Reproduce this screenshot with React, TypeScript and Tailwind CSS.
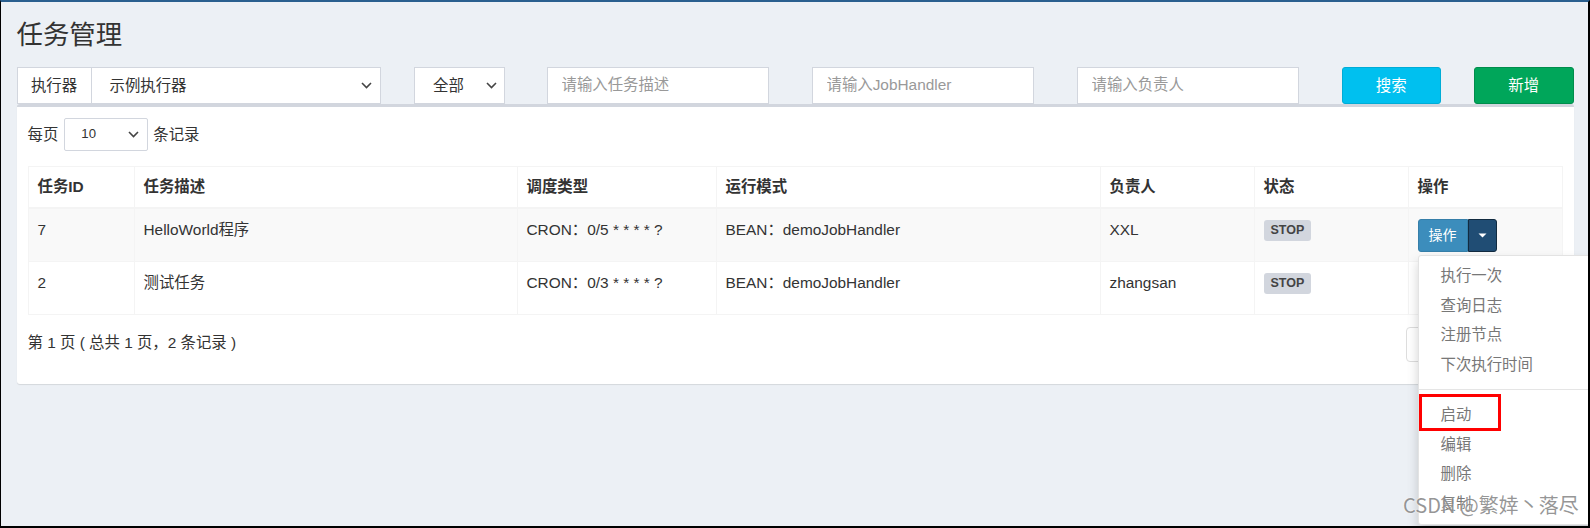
import React from "react";

function Chevron() {
  return (
    <svg width="11" height="7" viewBox="0 0 11 7" fill="none">
      <path d="M1 1l4.5 4.5L10 1" stroke="#444" strokeWidth="1.6" />
    </svg>
  );
}

function Caret() {
  return (
    <svg width="9" height="5" viewBox="0 0 9 5">
      <path d="M0.5 0.5h8L4.5 4.5z" fill="#fff" />
    </svg>
  );
}

const cols = "grid grid-cols-[106px_383px_199px_384px_154px_154px_155px]";

function BtnGroup({ open }: { open?: boolean }) {
  return (
    <div className="relative inline-flex h-[33px]">
      <div className="flex items-center rounded-l-[3px] border border-[#367fa9] bg-[#3c8dbc] px-[10px] text-[14px] text-white">
        操作
      </div>
      <div className="flex w-[29px] items-center justify-center rounded-r-[3px] border border-[#122b40] bg-[#204d74]">
        <Caret />
      </div>
      {open && (
        <div className="absolute left-0 top-[36px] z-20 w-[182px] rounded-[3px] border border-[#e3e3e3] bg-white py-[5.5px] text-[15.4px] text-[#777] shadow-[0_6px_12px_rgba(0,0,0,0.175)]">
          <div className="h-[29.5px] px-[22px] leading-[29.5px]">执行一次</div>
          <div className="h-[29.5px] px-[22px] leading-[29.5px]">查询日志</div>
          <div className="h-[29.5px] px-[22px] leading-[29.5px]">注册节点</div>
          <div className="h-[29.5px] px-[22px] leading-[29.5px]">下次执行时间</div>
          <div className="my-[10px] h-px bg-[#e5e5e5]" />
          <div className="h-[29.5px] px-[22px] leading-[29.5px]">启动</div>
          <div className="h-[29.5px] px-[22px] leading-[29.5px]">编辑</div>
          <div className="h-[29.5px] px-[22px] leading-[29.5px]">删除</div>
          <div className="h-[29.5px] px-[22px] leading-[29.5px]">复制</div>
          <div className="absolute left-0 top-[138px] h-[37px] w-[82px] border-[3px] border-[#ff0000]" />
        </div>
      )}
    </div>
  );
}

type Row = { id: string; desc: string; cron: string; mode: string; author: string };

const rows: Row[] = [
  { id: "7", desc: "HelloWorld程序", cron: "CRON：0/5 * * * * ?", mode: "BEAN：demoJobHandler", author: "XXL" },
  { id: "2", desc: "测试任务", cron: "CRON：0/3 * * * * ?", mode: "BEAN：demoJobHandler", author: "zhangsan" },
];

export default function App() {
  return (
    <div className="relative h-[528px] w-[1590px] overflow-hidden bg-[#ecf0f5] font-['Liberation_Sans','Noto_Sans_CJK_SC',sans-serif] text-[15.4px] text-[#333]">
      <div className="px-[16.5px] pt-[21px]">
        <h1 className="text-[26.4px] font-normal leading-[29px] text-[#333]">任务管理</h1>
      </div>

      <div className="px-[16.5px] pt-[16.5px]">
        <div className="-mx-[16.5px] grid grid-cols-12">
          <div className="col-span-3 px-[16.5px]">
            <div className="flex h-[37.4px]">
              <div className="flex w-[75px] shrink-0 items-center justify-center border border-[#d2d6de] bg-white">
                执行器
              </div>
              <div className="flex flex-1 items-center justify-between border border-l-0 border-[#d2d6de] bg-white pl-[18px] pr-[8px]">
                <span>示例执行器</span>
                <Chevron />
              </div>
            </div>
          </div>
          <div className="col-span-1 px-[16.5px]">
            <div className="flex h-[37.4px] w-[91px] items-center justify-between border border-[#d2d6de] bg-white pl-[18px] pr-[7px]">
              <span>全部</span>
              <Chevron />
            </div>
          </div>
          <div className="col-span-2 px-[16.5px]">
            <input
              readOnly
              placeholder="请输入任务描述"
              className="h-[37.4px] w-[222px] border border-[#d2d6de] bg-white px-[14px] outline-none placeholder:text-[#999]"
            />
          </div>
          <div className="col-span-2 px-[16.5px]">
            <input
              readOnly
              placeholder="请输入JobHandler"
              className="h-[37.4px] w-[222px] border border-[#d2d6de] bg-white px-[14px] outline-none placeholder:text-[#999]"
            />
          </div>
          <div className="col-span-2 px-[16.5px]">
            <input
              readOnly
              placeholder="请输入负责人"
              className="h-[37.4px] w-[222px] border border-[#d2d6de] bg-white px-[14px] outline-none placeholder:text-[#999]"
            />
          </div>
          <div className="col-span-1 px-[16.5px]">
            <div className="flex h-[37.4px] items-center justify-center rounded-[3px] border border-[#00acd6] bg-[#00c0ef] text-white">
              搜索
            </div>
          </div>
          <div className="col-span-1 px-[16.5px]">
            <div className="flex h-[37.4px] items-center justify-center rounded-[3px] border border-[#008d4c] bg-[#00a65a] text-white">
              新增
            </div>
          </div>
        </div>

        <div className="rounded-[3px] border-t-[3.3px] border-t-[#d2d6de] bg-white px-[11px] pb-[22px] pt-[11px] shadow-[0_1px_1px_rgba(0,0,0,0.1)]">
          <div className="flex h-[33px] items-center">
            <span>每页</span>
            <div className="ml-[6px] flex h-[33px] w-[84px] items-center justify-between rounded-[2px] border border-[#d2d6de] pl-[16px] pr-[8px] text-[13.2px]">
              <span>10</span>
              <Chevron />
            </div>
            <span className="ml-[5px]">条记录</span>
          </div>

          <div className="mt-[15px] border-l border-r border-t border-[#f4f4f4]">
            <div className={`${cols} h-[42px] border-b-2 border-[#f4f4f4] font-bold`}>
              {["任务ID", "任务描述", "调度类型", "运行模式", "负责人", "状态", "操作"].map((h, i) => (
                <div
                  key={h}
                  className={`px-[9px] pt-[9.5px] leading-[22px] ${i < 6 ? "border-r border-[#f4f4f4]" : ""}`}
                >
                  {h}
                </div>
              ))}
            </div>
            {rows.map((r, idx) => (
              <div
                key={r.id}
                className={`${cols} h-[53px] border-b border-[#f4f4f4] ${idx === 0 ? "bg-[#f9f9f9]" : "bg-white"}`}
              >
                <div className="border-r border-[#f4f4f4] px-[9px] pt-[10px] leading-[22px]">{r.id}</div>
                <div className="border-r border-[#f4f4f4] px-[9px] pt-[10px] leading-[22px]">{r.desc}</div>
                <div className="border-r border-[#f4f4f4] px-[9px] pt-[10px] leading-[22px]">{r.cron}</div>
                <div className="border-r border-[#f4f4f4] px-[9px] pt-[10px] leading-[22px]">{r.mode}</div>
                <div className="border-r border-[#f4f4f4] px-[9px] pt-[10px] leading-[22px]">{r.author}</div>
                <div className="border-r border-[#f4f4f4] px-[9px] pt-[10px] leading-[22px]">
                  <span className="inline-block rounded-[3px] bg-[#d2d6de] px-[7px] align-middle text-[12.5px] font-bold leading-[21px] text-[#444]">
                    STOP
                  </span>
                </div>
                <div className="px-[9px] pt-[10px]">
                  <BtnGroup open={idx === 0} />
                </div>
              </div>
            ))}
          </div>

          <div className="flex justify-between pt-[12px]">
            <div className="pt-[5px] leading-[22px]">第 1 页 ( 总共 1 页，2 条记录 )</div>
            <div className="flex h-[35px] w-[157px]">
              <div className="flex flex-1 items-center justify-center rounded-l-[4px] border border-[#ddd] text-[#777]">上页</div>
              <div className="flex w-[40px] items-center justify-center border-y border-[#367fa9] bg-[#3c8dbc] text-white">1</div>
              <div className="flex flex-1 items-center justify-center rounded-r-[4px] border border-[#ddd] text-[#777]">下页</div>
            </div>
          </div>
        </div>
      </div>

      <div className="pointer-events-none absolute left-[1403px] top-[491px] z-30 whitespace-nowrap font-['Noto_Sans_CJK_SC',sans-serif] text-[20px] leading-[28px] text-[rgba(110,110,110,0.72)] [text-shadow:0_0_2px_rgba(255,255,255,0.9)]">
        CSDN @繁婞丶落尽
      </div>

      <div className="pointer-events-none absolute inset-0 z-40 border-b-2 border-l border-r-2 border-t-2 border-black border-t-[#2a5f8f]" />
    </div>
  );
}
